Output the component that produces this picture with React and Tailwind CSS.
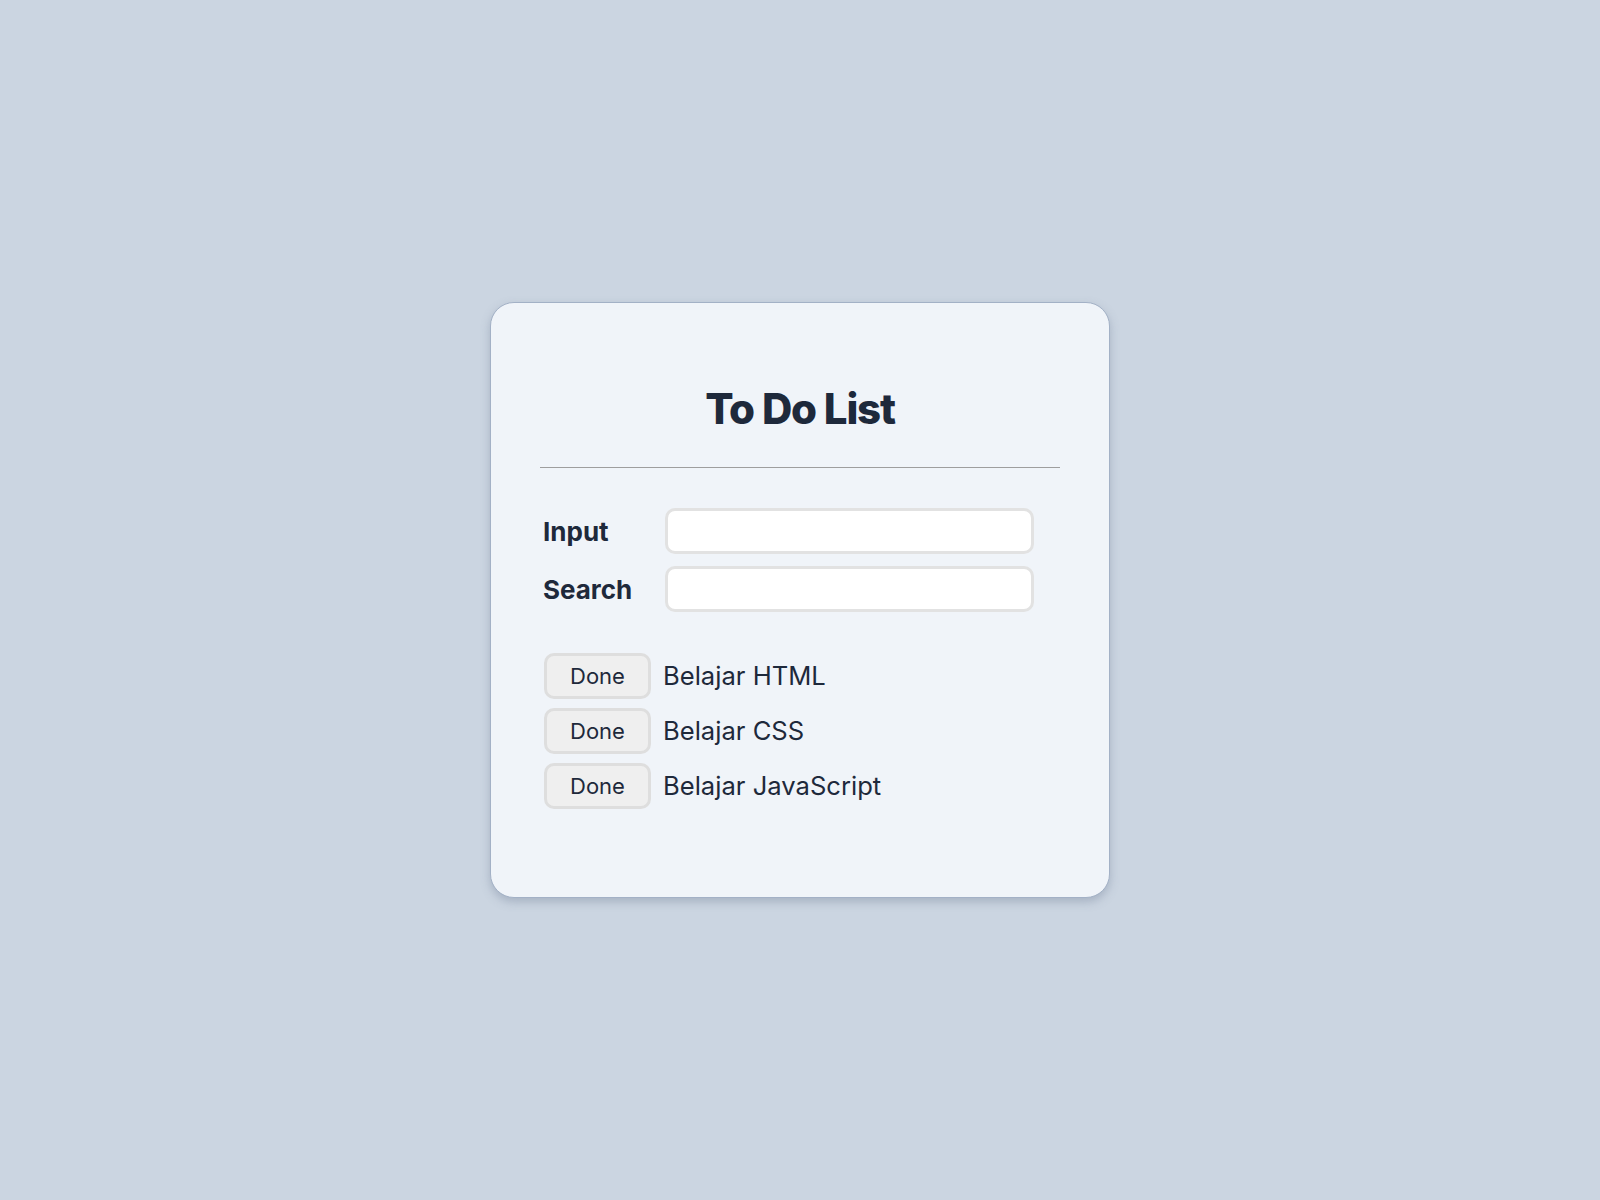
export default function App() {
  const items = ["Belajar HTML", "Belajar CSS", "Belajar JavaScript"];
  return (
    <div
      className="min-h-[1200px] w-full bg-[#cbd5e1] flex items-start justify-center pt-[302px]"
      style={{ fontFamily: "Inter, 'Noto Sans', sans-serif" }}
    >
      <div className="w-[620px] h-[596px] bg-[#f0f4f9] border border-[#a3b1c6] rounded-[24px] shadow-[0_4px_10px_rgba(100,116,139,0.35)] px-[49px] pt-[82px]">
        <h1 className="text-center text-[42px] leading-[48px] font-extrabold text-[#1e293b] tracking-[-1.2px]">
          To Do List
        </h1>
        <div className="mt-[34px] h-px bg-[#9e9e9e]" />
        <div className="mt-[40px] pl-[3px] flex flex-col gap-[12px]">
          {["Input", "Search"].map((l) => (
            <div key={l} className="flex items-center">
              <label className="w-[122px] text-[26px] font-bold text-[#1e293b]">{l}</label>
              <input
                className="w-[369px] h-[46px] bg-white border-[3px] border-[#e2e2e2] rounded-[10px] outline-none px-2"
                type="text"
              />
            </div>
          ))}
        </div>
        <div className="mt-[41px] pl-[4px] flex flex-col gap-[9px]">
          {items.map((t) => (
            <div key={t} className="flex items-center">
              <button className="w-[107px] h-[46px] bg-[#efefef] border-[3px] border-[#dedede] rounded-[10px] text-[22px] text-[#1e293b]">
                Done
              </button>
              <span className="ml-[12px] text-[25.6px] text-[#1e293b]">{t}</span>
            </div>
          ))}
        </div>
      </div>
    </div>
  );
}
